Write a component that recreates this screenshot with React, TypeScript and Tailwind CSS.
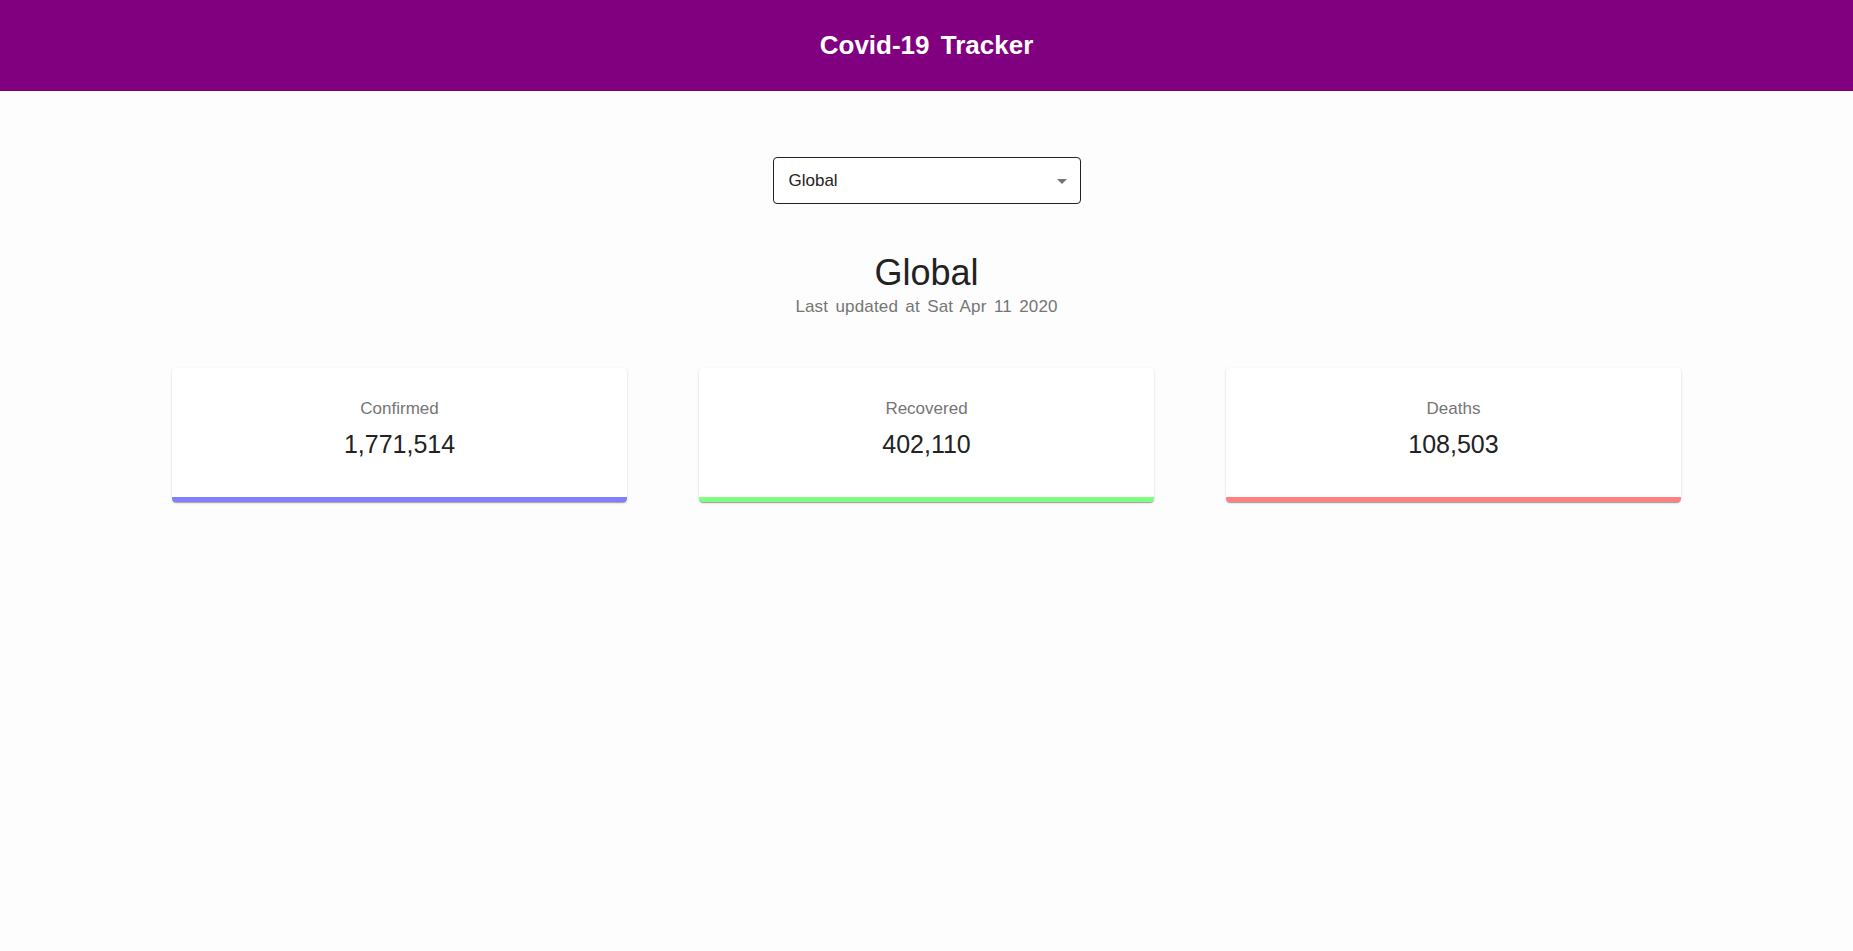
import React from "react";

type Stat = {
  label: string;
  value: string;
  bar: string;
};

const stats: Stat[] = [
  { label: "Confirmed", value: "1,771,514", bar: "border-b-[#8080ff]" },
  { label: "Recovered", value: "402,110", bar: "border-b-[#80ff80]" },
  { label: "Deaths", value: "108,503", bar: "border-b-[#ff8080]" },
];

const StatCard = ({ label, value, bar }: Stat) => (
  <div
    className={`w-[455px] h-[134px] bg-white rounded-[4px] border-b-[5px] ${bar} shadow-[0_2px_1px_-1px_rgba(0,0,0,0.2),0_1px_1px_0_rgba(0,0,0,0.14),0_1px_3px_0_rgba(0,0,0,0.12)] flex flex-col items-center pt-[29px]`}
  >
    <span className="text-[17px] leading-[24px] text-[#757575]">
      {label}
    </span>
    <span className="mt-[7px] text-[25px] leading-[32px] text-[#222]">
      {value}
    </span>
  </div>
);

export default function App() {
  return (
    <div className="min-h-[951px] bg-[#fcfdfc] font-['Liberation_Sans',Arial,sans-serif]">
      <header className="h-[91px] bg-[#800080] flex items-center justify-center">
        <h1 className="text-white text-[26px] font-bold [word-spacing:4px]">
          Covid-19 Tracker
        </h1>
      </header>

      <main className="flex flex-col items-center">
        <div className="mt-[66px] w-[308px] h-[47px] border border-[#222] rounded-[4px] bg-white flex items-center justify-between pl-[15px] pr-[6px]">
          <span className="text-[17px] text-[#222]">Global</span>
          <svg width="24" height="24" viewBox="0 0 24 24" className="fill-[#757575]">
            <path d="M7 10l5 5 5-5z" />
          </svg>
        </div>

        <h2 className="mt-[48px] text-[36px] leading-[42px] text-[#222]">Global</h2>
        <p className="mt-[1px] text-[17px] leading-[24px] text-[#757575] tracking-[0.15px] [word-spacing:2.5px]">
          Last updated at Sat Apr 11 2020
        </p>

        <div className="mt-[49px] flex gap-[72px]">
          {stats.map((s) => (
            <StatCard key={s.label} {...s} />
          ))}
        </div>
      </main>
    </div>
  );
}
